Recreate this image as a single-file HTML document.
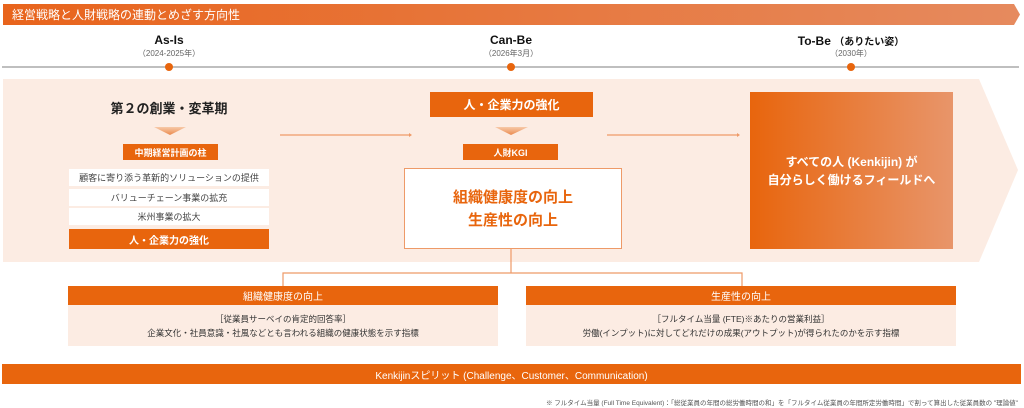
<!DOCTYPE html>
<html><head><meta charset="utf-8"><style>
*{margin:0;padding:0;box-sizing:border-box}
body{width:1024px;height:408px;background:#fff;position:relative;overflow:hidden;font-family:"Liberation Sans","Noto Sans CJK JP",sans-serif}
.a{position:absolute}
.c{display:flex;align-items:center;justify-content:center;text-align:center}
.or{background:#e8650d;color:#fff;font-weight:bold}
.lbl{font-weight:bold;font-size:12px;color:#111;transform:translateX(-50%);white-space:nowrap;text-align:center}
.sub{font-size:8px;color:#666;transform:translateX(-50%);white-space:nowrap}
.dot{width:8px;height:8px;border-radius:50%;background:#e8650d;top:63px}
.row{background:#fff;font-size:9px;color:#444;left:69px;width:200px;height:17px}
</style></head><body>
<svg class="a" style="left:0;top:0" width="1024" height="408">
<defs>
<linearGradient id="g1" x1="0" x2="1"><stop offset="0" stop-color="#e8641c"/><stop offset="1" stop-color="#e68a5e"/></linearGradient>
<linearGradient id="g2" x1="0" x2="1"><stop offset="0" stop-color="#e8650d"/><stop offset="1" stop-color="#e8956a"/></linearGradient>
<linearGradient id="tri" x1="0" x2="0" y1="0" y2="1"><stop offset="0" stop-color="#f7c9a8"/><stop offset="1" stop-color="#eb8a4e"/></linearGradient>
</defs>
<polygon points="3,4 1014,4 1020,14.5 1014,25 3,25" fill="url(#g1)"/>
<line x1="2" y1="67" x2="1019" y2="67" stroke="#aaa" stroke-width="1.5"/>
<polygon points="3,79 979,79 1018,170 979,262 3,262" fill="#fcece3"/>
<polygon points="154,127 186,127 170,135" fill="url(#tri)"/>
<polygon points="495,127 528,127 511,135" fill="url(#tri)"/>
<line x1="280" y1="135" x2="409" y2="135" stroke="#ee9a68" stroke-width="1.2"/>
<polygon points="409,133 412,135 409,137" fill="#ee9a68"/>
<line x1="607" y1="135" x2="737" y2="135" stroke="#ee9a68" stroke-width="1.2"/>
<polygon points="737,133 740,135 737,137" fill="#ee9a68"/>
<rect x="750" y="92" width="203" height="157" fill="url(#g2)"/>
<path d="M511 249V273M283 286V273H742V286" stroke="#ee9a68" stroke-width="1.2" fill="none"/>
</svg>
<div class="a" style="left:12px;top:6px;color:#fff;font-size:12px">経営戦略と人財戦略の連動とめざす方向性</div>
<div class="a lbl" style="left:169px;top:33px">As-Is</div>
<div class="a sub" style="left:169px;top:48px">（2024-2025年）</div>
<div class="a lbl" style="left:511px;top:33px">Can-Be</div>
<div class="a sub" style="left:511px;top:48px">（2026年3月）</div>
<div class="a lbl" style="left:851px;top:33px">To-Be <span style="font-size:10px">（ありたい姿）</span></div>
<div class="a sub" style="left:851px;top:48px">（2030年）</div>
<div class="a dot" style="left:165px"></div><div class="a dot" style="left:507px"></div><div class="a dot" style="left:847px"></div>
<div class="a" style="left:69px;width:200px;top:98px;text-align:center;font-weight:bold;font-size:13px;color:#222">第２の創業・変革期</div>
<div class="a c or" style="left:123px;width:95px;top:144px;height:16px;font-size:9px">中期経営計画の柱</div>
<div class="a c row" style="top:169px">顧客に寄り添う革新的ソリューションの提供</div>
<div class="a c row" style="top:189px">バリューチェーン事業の拡充</div>
<div class="a c row" style="top:208px">米州事業の拡大</div>
<div class="a c or" style="left:69px;width:200px;top:229px;height:20px;font-size:10px">人・企業力の強化</div>
<div class="a c or" style="left:430px;width:163px;top:92px;height:25px;font-size:12px">人・企業力の強化</div>
<div class="a c or" style="left:463px;width:95px;top:144px;height:16px;font-size:9px">人財KGI</div>
<div class="a c" style="left:404px;width:218px;top:168px;height:81px;background:#fff;border:1.5px solid #ee9a68;color:#e8650d;font-weight:bold;font-size:15px;line-height:23px">組織健康度の向上<br>生産性の向上</div>
<div class="a c" style="left:750px;width:203px;top:92px;height:157px;color:#fff;font-weight:bold;font-size:12px;line-height:18px">すべての人 (Kenkijin) が<br>自分らしく働けるフィールドへ</div>
<div class="a c or" style="left:68px;width:430px;top:286px;height:19px;font-size:10px;font-weight:normal">組織健康度の向上</div>
<div class="a c" style="left:68px;width:430px;top:305px;height:41px;background:#fcece3;font-size:8.5px;color:#333;line-height:14px">［従業員サーベイの肯定的回答率］<br>企業文化・社員意識・社風などとも言われる組織の健康状態を示す指標</div>
<div class="a c or" style="left:526px;width:430px;top:286px;height:19px;font-size:10px;font-weight:normal">生産性の向上</div>
<div class="a c" style="left:526px;width:430px;top:305px;height:41px;background:#fcece3;font-size:8.5px;color:#333;line-height:14px">［フルタイム当量 (FTE)※あたりの営業利益］<br>労働(インプット)に対してどれだけの成果(アウトプット)が得られたのかを示す指標</div>
<div class="a c or" style="left:2px;width:1019px;top:364px;height:20px;font-size:10px;font-weight:normal">Kenkijinスピリット (Challenge、Customer、Communication)</div>
<div class="a" style="right:6px;top:397px;font-size:6.5px;color:#555;white-space:nowrap">※ フルタイム当量 (Full Time Equivalent)：「総従業員の年間の総労働時間の和」を「フルタイム従業員の年間所定労働時間」で割って算出した従業員数の "理論値"</div>
</body></html>
